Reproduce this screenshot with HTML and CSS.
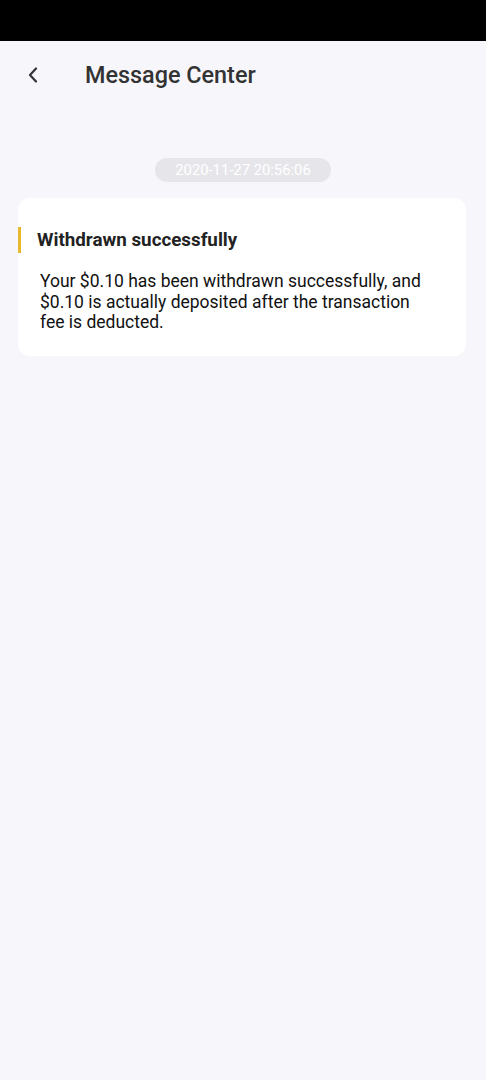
FILE: index.html
```html
<!DOCTYPE html>
<html>
<head>
<meta charset="utf-8">
<link rel="stylesheet" href="styles.css">
</head>
<body>
<div class="status"></div>
<header class="top">
  <span class="back"><svg width="12" height="16" viewBox="0 0 12 16"><path d="M9 1.5 L3 8 L9 14.5" fill="none" stroke="#333" stroke-width="2.2" stroke-linecap="round" stroke-linejoin="round"/></svg></span>
  <h1 class="title">Message Center</h1>
</header>
<main class="list">
  <div class="time"><span class="pill">2020-11-27 20:56:06</span></div>
  <section class="card">
    <h2 class="card-title">Withdrawn successfully</h2>
    <p class="card-body">Your $0.10 has been withdrawn successfully, and $0.10 is actually deposited after the transaction fee is deducted.</p>
  </section>
</main>
</body>
</html>
```
FILE: styles.css
```css
html, body { margin: 0; padding: 0; }
body {
  background: #f7f7fb;
  font-family: Roboto, "Liberation Sans", sans-serif;
  height: 1080px;
}
.status { height: 41px; background: #000; }
.top {
  display: flex;
  align-items: center;
  height: 68px;
}
.back {
  display: flex;
  width: 12px;
  height: 16px;
  margin-left: 27px;
}
.title {
  margin: 0 0 0 46px;
  font-size: 23.4px;
  font-weight: 500;
  color: #333;
}
.list { padding: 0 20px 0 18px; }
.time {
  display: flex;
  justify-content: center;
  margin-top: 49px;
  padding-left: 2px;
}
.pill {
  background: #e6e6ea;
  color: #fff;
  font-size: 14.8px;
  line-height: 24px;
  height: 24px;
  padding: 0 20px;
  border-radius: 12px;
}
.card {
  margin-top: 16px;
  background: #fff;
  border-radius: 12px;
  padding: 29px 20px 23px 0;
}
.card-title {
  margin: 0;
  border-left: 3px solid #e8b92e;
  padding-left: 16px;
  font-size: 18.8px;
  font-weight: 700;
  color: #222;
  line-height: 26px;
}
.card-body {
  margin: 18px 0 0 22px;
  font-size: 17.5px;
  line-height: 20.5px;
  color: #111;
  max-width: 386px;
}
```
